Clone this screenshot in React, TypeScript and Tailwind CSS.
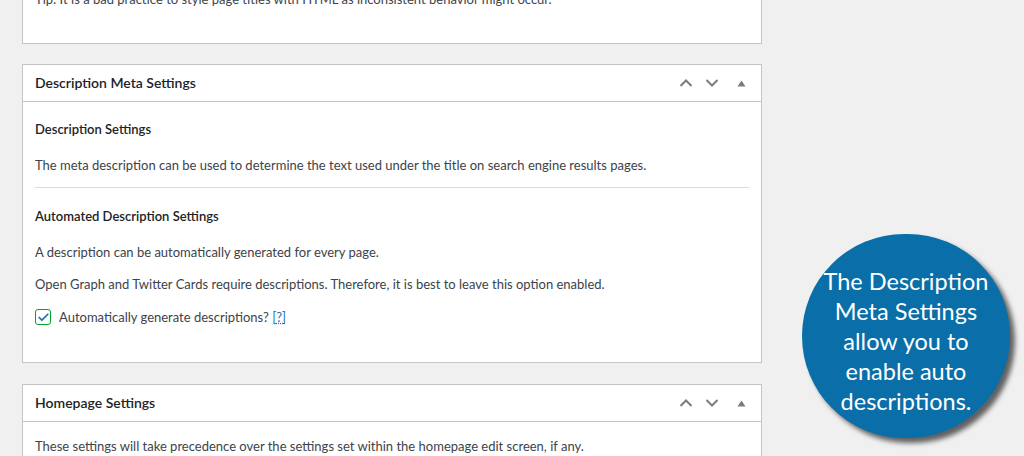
import { Check } from "lucide-react";

const font = { fontFamily: "Lato, 'Liberation Sans', sans-serif" };

function Chevron({ dir }: { dir: "up" | "down" }) {
  return (
    <svg width="14" height="10" viewBox="0 0 14 10" aria-hidden>
      <path
        d={dir === "up" ? "M1.5 8 L7 2.5 L12.5 8" : "M1.5 2 L7 7.5 L12.5 2"}
        fill="none"
        stroke="#787c82"
        strokeWidth="2"
      />
    </svg>
  );
}

function PanelHeader({ title }: { title: string }) {
  return (
    <div className="flex h-[37px] items-center justify-between border-b border-[#c3c4c7] pl-[12px] pr-[14px]">
      <h2 className="-mt-[1px] text-[14px] font-semibold text-[#1d2327]">{title}</h2>
      <div className="flex items-center">
        <span className="flex w-[26px] justify-center">
          <Chevron dir="up" />
        </span>
        <span className="flex w-[26px] justify-center">
          <Chevron dir="down" />
        </span>
        <span className="ml-[10px] flex w-[12px] justify-center">
          <svg width="9" height="7" viewBox="0 0 9 7" aria-hidden>
            <path d="M4.5 0.5 L8.5 6.5 L0.5 6.5 Z" fill="#787c82" />
          </svg>
        </span>
      </div>
    </div>
  );
}

export default function App() {
  return (
    <div
      className="relative h-[456px] w-[1024px] overflow-hidden bg-[#f0f0f1] text-[13px] text-[#3c434a]"
      style={font}
    >
      <div className="ml-[22px] w-[740px]">
        {/* previous panel, scrolled off the top */}
        <section className="-mt-[12px] border border-t-0 border-[#c3c4c7] bg-white px-[12px] pb-[33px]">
          <p className="leading-[22px]">
            Tip: It is a bad practice to style page titles with HTML as inconsistent behavior might occur.
          </p>
        </section>

        <section className="mt-[20px] border border-[#c3c4c7] bg-white">
          <PanelHeader title="Description Meta Settings" />
          <div className="px-[12px] pb-[34px] pt-[16px]">
            <h3 className="text-[13px] font-semibold leading-[22px] text-[#1d2327]">Description Settings</h3>
            <p className="mt-[14px] leading-[22px]">
              The meta description can be used to determine the text used under the title on search engine results
              pages.
            </p>
            <hr className="mt-[11px] border-[#dcdcde]" />
            <h3 className="mt-[17px] text-[13px] font-semibold leading-[22px] text-[#1d2327]">
              Automated Description Settings
            </h3>
            <p className="mt-[14px] leading-[22px]">A description can be automatically generated for every page.</p>
            <p className="mt-[10px] leading-[22px]">
              Open Graph and Twitter Cards require descriptions. Therefore, it is best to leave this option enabled.
            </p>
            <label className="mt-[11px] flex items-center gap-[8px] leading-[22px]">
              <span className="flex h-[16px] w-[16px] items-center justify-center rounded-[3px] border border-[#00a32a] bg-white">
                <Check size={13} strokeWidth={3.2} className="text-[#2271b1]" />
              </span>
              <span>
                Automatically generate descriptions?{" "}
                <a className="text-[#2271b1] underline decoration-dotted">[?]</a>
              </span>
            </label>
          </div>
        </section>

        <section className="mt-[21px] border border-[#c3c4c7] bg-white">
          <PanelHeader title="Homepage Settings" />
          <div className="px-[12px] pt-[13px]">
            <p className="leading-[22px]">
              These settings will take precedence over the settings set within the homepage edit screen, if any.
            </p>
          </div>
        </section>
      </div>

      {/* callout bubble */}
      <div className="absolute left-[802px] top-[234px] flex h-[204px] w-[208px] items-center justify-center rounded-full bg-[#0a6ea8] pt-[10px] shadow-[5px_5px_5px_rgba(0,0,0,0.6)]">
        <p className="text-center text-[23.5px] leading-[30px] text-white" style={font}>
          The Description
          <br />
          Meta Settings
          <br />
          allow you to
          <br />
          enable auto
          <br />
          descriptions.
        </p>
      </div>
    </div>
  );
}
